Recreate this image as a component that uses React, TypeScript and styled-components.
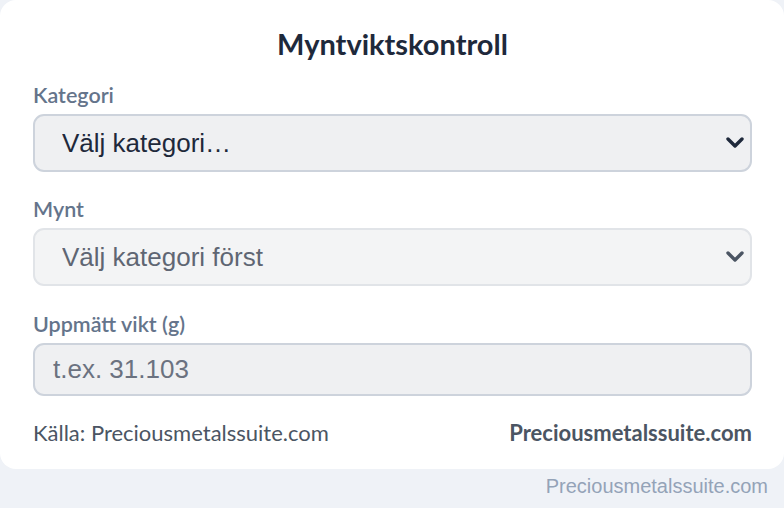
import React, { useState } from 'react';
import styled, { createGlobalStyle } from 'styled-components';

const GlobalStyle = createGlobalStyle`
  html, body {
    margin: 0;
    padding: 0;
    background: #eff2f7;
  }
  * {
    box-sizing: border-box;
  }
`;

const Page = styled.div`
  width: 784px;
  min-height: 508px;
  display: flex;
  flex-direction: column;
`;

const Card = styled.div`
  background: #ffffff;
  border-radius: 16px;
  padding: 25px 32px 24px 33px;
  display: flex;
  flex-direction: column;
`;

const Title = styled.h1`
  margin: 0 0 20px;
  text-align: center;
  font-family: 'Lato', sans-serif;
  font-size: 29px;
  font-weight: 700;
  color: #1e293b;
  line-height: 38px;
`;

const Field = styled.div<{ $gap?: number }>`
  display: flex;
  flex-direction: column;
  margin-bottom: ${(p) => p.$gap ?? 25}px;
`;

const Label = styled.label`
  font-family: 'Lato', sans-serif;
  font-size: 21.5px;
  font-weight: 600;
  color: #64748b;
  line-height: 24px;
  margin-bottom: 7px;
`;

const SelectWrap = styled.div`
  position: relative;
`;

const Select = styled.select<{ $disabled?: boolean }>`
  appearance: none;
  width: 100%;
  height: 58px;
  padding: 0 50px 0 27px;
  border: 2px solid ${(p) => (p.$disabled ? '#e1e4e8' : '#cdd3dc')};
  border-radius: 11px;
  background: ${(p) => (p.$disabled ? '#f3f4f5' : '#eff0f2')};
  font-family: 'Liberation Sans', Arial, sans-serif;
  font-size: 26px;
  color: ${(p) => (p.$disabled ? '#5f6673' : '#1e293b')};
  opacity: 1;
  outline: none;
`;

const Chevron = styled.svg<{ $muted?: boolean }>`
  position: absolute;
  right: 8px;
  top: 50%;
  transform: translateY(-50%);
  width: 18px;
  height: 12px;
  pointer-events: none;
  color: ${(p) => (p.$muted ? '#4b5563' : '#1e293b')};
`;

const Input = styled.input`
  width: 100%;
  height: 53px;
  padding: 0 18px;
  border: 2px solid #cdd3dc;
  border-radius: 11px;
  background: #eff0f2;
  font-family: 'Liberation Sans', Arial, sans-serif;
  font-size: 26px;
  color: #1e293b;
  outline: none;

  &::placeholder {
    color: #6b7280;
  }
`;

const Footer = styled.div`
  display: flex;
  justify-content: space-between;
  align-items: center;
  margin-top: 0;
  font-family: 'Lato', sans-serif;
  font-size: 22px;
  line-height: 24px;
`;

const Source = styled.span`
  color: #4b5563;
`;

const Brand = styled.span`
  color: #4b5563;
  font-weight: 700;
`;

const Credit = styled.div`
  text-align: right;
  padding: 6px 16px 0 0;
  font-family: 'Liberation Sans', Arial, sans-serif;
  font-size: 20px;
  color: #94a3b8;
`;

const ChevronIcon = ({ muted }: { muted?: boolean }) => (
  <Chevron $muted={muted} viewBox="0 0 18 12">
    <path d="M2 2l7 7 7-7" fill="none" stroke="currentColor" strokeWidth="3.4" strokeLinecap="round" strokeLinejoin="round" />
  </Chevron>
);

export default function App() {
  const [category, setCategory] = useState('');
  const [weight, setWeight] = useState('');

  return (
    <Page>
      <GlobalStyle />
      <Card>
        <Title>Myntviktskontroll</Title>

        <Field>
          <Label>Kategori</Label>
          <SelectWrap>
            <Select value={category} onChange={(e) => setCategory(e.target.value)}>
              <option value="">Välj kategori…</option>
              <option value="guld">Guldmynt</option>
              <option value="silver">Silvermynt</option>
            </Select>
            <ChevronIcon />
          </SelectWrap>
        </Field>

        <Field $gap={26}>
          <Label>Mynt</Label>
          <SelectWrap>
            <Select $disabled disabled value="">
              <option value="">Välj kategori först</option>
            </Select>
            <ChevronIcon muted />
          </SelectWrap>
        </Field>

        <Field>
          <Label>Uppmätt vikt (g)</Label>
          <Input
            type="text"
            inputMode="decimal"
            placeholder="t.ex. 31.103"
            value={weight}
            onChange={(e) => setWeight(e.target.value)}
          />
        </Field>

        <Footer>
          <Source>Källa: Preciousmetalssuite.com</Source>
          <Brand>Preciousmetalssuite.com</Brand>
        </Footer>
      </Card>
      <Credit>Preciousmetalssuite.com</Credit>
    </Page>
  );
}
